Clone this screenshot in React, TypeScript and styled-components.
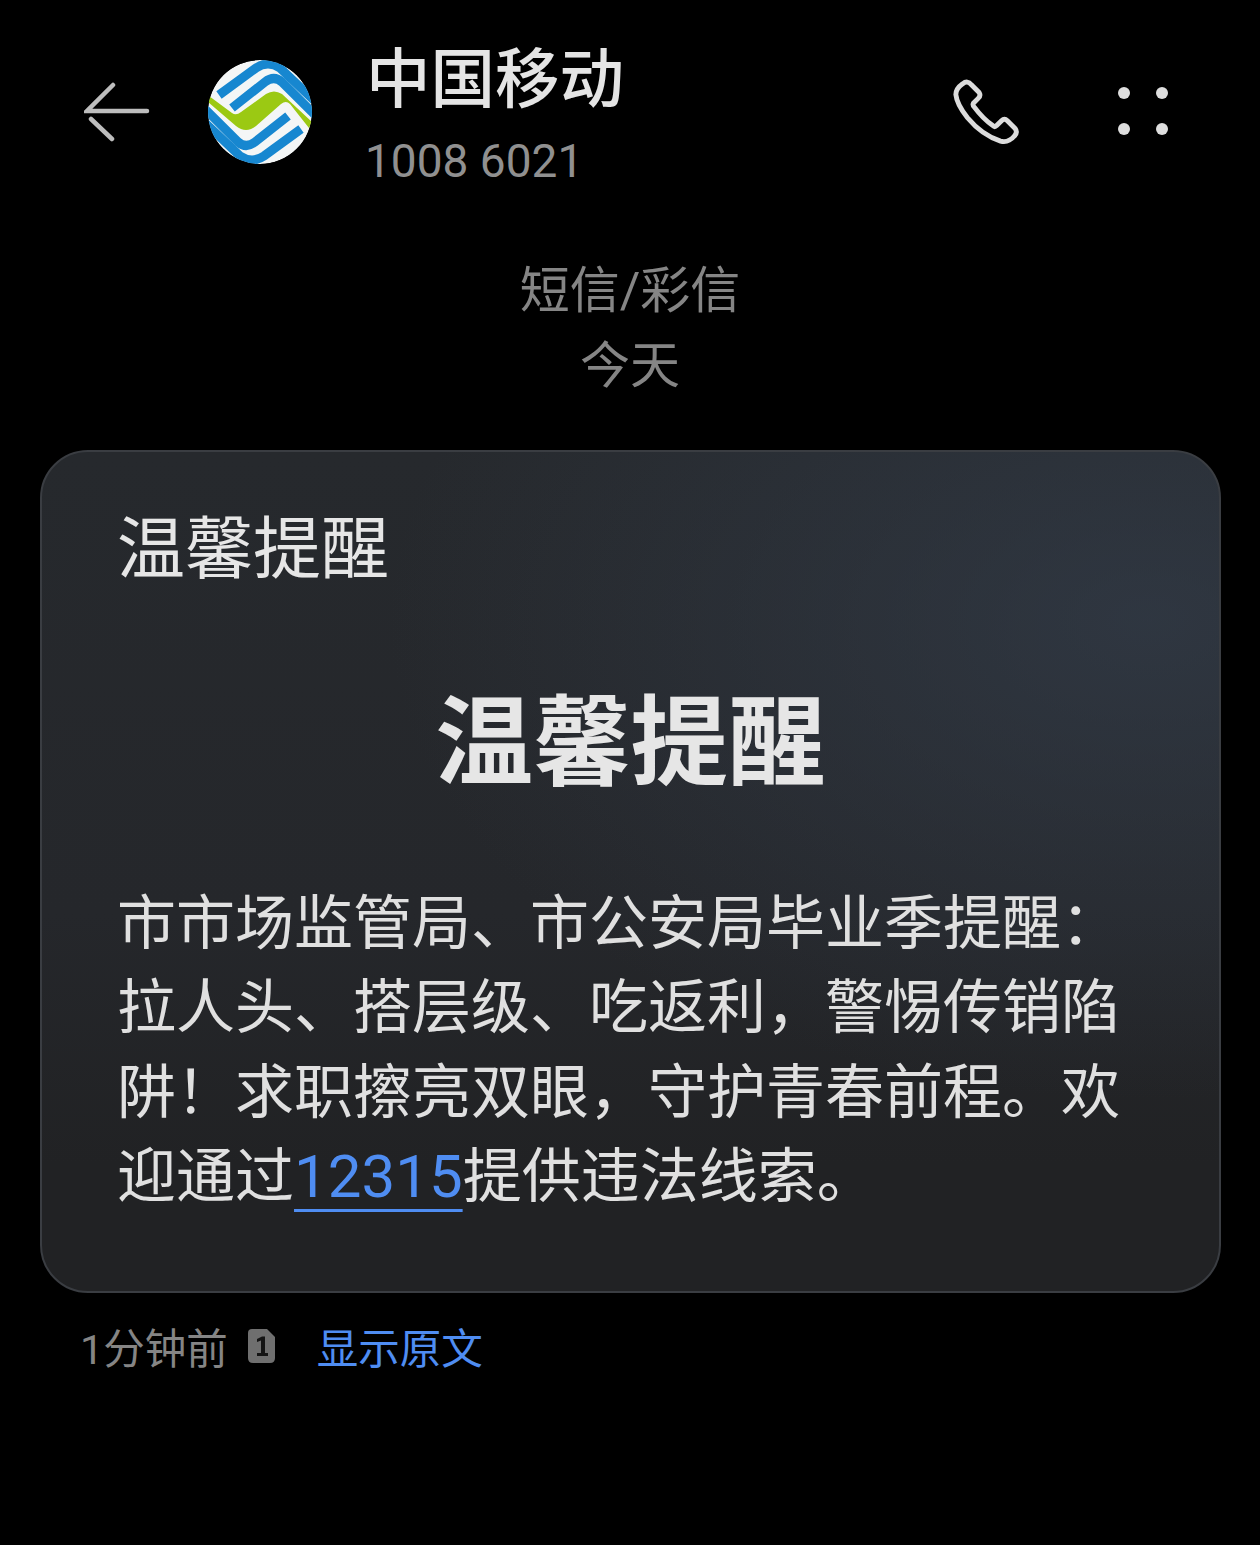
import React from "react";
import styled, { createGlobalStyle } from "styled-components";

const FONT = `Roboto, "Noto Sans CJK SC", sans-serif`;

// full-width punctuation is kept as escapes so it can't get normalised to ASCII
const MESSAGE_START =
  "市市场监管局、市公安局毕业季提醒\uFF1A拉人头、搭层级、吃返利\uFF0C警惕传销陷阱\uFF01求职擦亮双眼\uFF0C守护青春前程。欢迎通过";
const MESSAGE_END = "提供违法线索。";

const GlobalStyle = createGlobalStyle`
  html, body {
    margin: 0;
    padding: 0;
    background: #000;
  }
  body {
    font-family: ${FONT};
    -webkit-font-smoothing: antialiased;
  }
`;

const Page = styled.div`
  width: 1260px;
  height: 1545px;
  overflow: hidden;
  background: #000;
  box-sizing: border-box;
`;

const Header = styled.header`
  display: flex;
  align-items: flex-start;
  height: 254px;
  padding: 0 92px 0 84px;
  box-sizing: border-box;
`;

const BackButton = styled.button`
  display: block;
  width: 66px;
  height: 60px;
  margin: 82px 58px 0 0;
  padding: 0;
  border: 0;
  background: none;
`;

const Avatar = styled.svg`
  display: block;
  flex: none;
  width: 104px;
  height: 104px;
  margin-top: 60px;
`;

const Contact = styled.div`
  margin: 39px 0 0 54px;
`;

const ContactName = styled.div`
  font-size: 64.5px;
  line-height: 82px;
  font-weight: 500;
  color: #e4e4e4;
`;

const ContactNumber = styled.div`
  font-size: 46px;
  line-height: 80px;
  font-weight: 400;
  color: #909090;
  margin-left: -1px;
`;

const Actions = styled.div`
  display: flex;
  align-items: flex-start;
  margin-left: auto;
`;

const PhoneIcon = styled.svg`
  display: block;
  width: 70px;
  height: 70px;
  margin: 76px 98px 0 0;
`;

const MoreGrid = styled.div`
  display: grid;
  grid-template-columns: repeat(2, 12px);
  grid-gap: 24px 26px;
  margin-top: 87px;
`;

const MoreDot = styled.span`
  width: 12px;
  height: 12px;
  border-radius: 50%;
  background: #dedede;
`;

const Divider = styled.div`
  text-align: center;
  font-size: 50px;
  line-height: 75px;
  font-weight: 400;
  color: #858585;
`;

const Bubble = styled.article`
  box-sizing: border-box;
  width: 1181px;
  height: 843px;
  margin: 46px 0 0 40px;
  padding: 54px 75px 0;
  border: 2px solid #3a3d42;
  border-radius: 48px;
  background:
    radial-gradient(ellipse 760px 480px at 94% 20%, rgba(52, 62, 76, 0.65), rgba(52, 62, 76, 0) 100%),
    linear-gradient(180deg, #26292d 0%, #25272b 55%, #212224 85%);
`;

const BubbleLabel = styled.div`
  font-size: 68px;
  line-height: 88px;
  font-weight: 400;
  color: #e6e6e6;
`;

const Headline = styled.h1`
  margin: 90px 0 0;
  text-align: center;
  font-size: 97.5px;
  line-height: 120px;
  font-weight: 700;
  color: #e6e6e6;
`;

const BodyText = styled.p`
  margin: 78px 0 0;
  width: 1010px;
  font-size: 59px;
  line-height: 84.3px;
  font-weight: 400;
  color: #e0e0e0;
`;

const PhoneLink = styled.a`
  color: #4f8df2;
  font-size: 60px;
  line-height: 0;
  text-decoration: underline;
  text-decoration-thickness: 2.5px;
  text-underline-offset: 12px;
`;

const Meta = styled.div`
  display: flex;
  align-items: center;
  height: 60px;
  margin: 23px 0 0 80px;
  font-size: 41.5px;
  font-weight: 400;
`;

const MetaTime = styled.span`
  color: #858585;
`;

const SimBadge = styled.svg`
  display: block;
  width: 29px;
  height: 36px;
  margin: 0 41px 0 19px;
`;

const ShowOriginal = styled.a`
  color: #4f8df2;
`;

function ChinaMobileLogo() {
  const outer = "M11 35 L48 8 Q60 0 72 8 L112 46";
  const inner = "M24 48 L57 22 Q66 15 74 22 L110 58";
  return (
    <Avatar viewBox="0 0 104 104">
      <defs>
        <clipPath id="logo-disc">
          <circle cx="52" cy="52" r="52" />
        </clipPath>
      </defs>
      <g clipPath="url(#logo-disc)">
        <circle cx="52" cy="52" r="52" fill="#f4f6f6" />
        <g fill="none" stroke="#1787d0" strokeWidth="9">
          <path d={outer} />
          <path d={inner} />
          <g transform="rotate(180 52 52)">
            <path d={outer} />
            <path d={inner} />
          </g>
        </g>
        <path
          d="M1 36 L24 53 Q28 56 33 52 L58 34 Q66 29 74 34 L104 62 L101 68 L82 44 Q78 40 73 44 L48 66 Q38 74 28 66 L0 42 Z"
          fill="#9bc913"
        />
      </g>
    </Avatar>
  );
}

export default function App() {
  return (
    <Page lang="zh-CN">
      <GlobalStyle />
      <Header>
        <BackButton aria-label="返回">
          <svg width="66" height="60" viewBox="0 0 66 60" fill="none" stroke="#bdbdbd" strokeWidth="4.5" strokeLinecap="round">
            <path d="M29 3 L3 29 H63" />
            <path d="M7 37 L28 57" />
          </svg>
        </BackButton>
        <ChinaMobileLogo />
        <Contact>
          <ContactName>中国移动</ContactName>
          <ContactNumber>1008 6021</ContactNumber>
        </Contact>
        <Actions>
          <PhoneIcon viewBox="-1 -1 72 72" fill="none" stroke="#dcdcdc" strokeWidth="5" strokeLinejoin="round">
            <path d="M12 7 Q17 3 21 8 L29 16 Q31 19 28 22 L23 27 Q22 29 24 31 Q33 43 43 50 Q45 52 47 50 L52 45 Q55 42 58 45 L66 53 Q69 57 65 61 Q59 68 51 66 Q32 60 17 42 Q6 28 5 18 Q5 12 12 7 Z" />
          </PhoneIcon>
          <MoreGrid>
            <MoreDot />
            <MoreDot />
            <MoreDot />
            <MoreDot />
          </MoreGrid>
        </Actions>
      </Header>
      <Divider>
        短信/彩信
        <br />
        今天
      </Divider>
      <Bubble>
        <BubbleLabel>温馨提醒</BubbleLabel>
        <Headline>温馨提醒</Headline>
        <BodyText>
          {MESSAGE_START}
          <PhoneLink>12315</PhoneLink>
          {MESSAGE_END}
        </BodyText>
      </Bubble>
      <Meta>
        <MetaTime>1分钟前</MetaTime>
        <SimBadge viewBox="0 0 29 36">
          <path d="M5 1 H20 L28 9 V30 Q28 35 23 35 H6 Q1 35 1 30 V5 Q1 1 5 1 Z" fill="#6f6f6f" />
          <path d="M10 11 L15 8.5 H18 V25 H21 V28 H10 V25 H14 V12.5 L10 14 Z" fill="#141414" />
        </SimBadge>
        <ShowOriginal>显示原文</ShowOriginal>
      </Meta>
    </Page>
  );
}
